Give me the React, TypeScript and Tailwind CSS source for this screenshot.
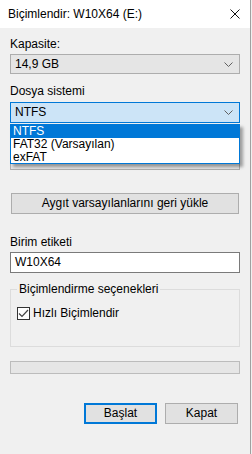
const Chevron = () => (
  <svg width="9" height="5" viewBox="0 0 9 5" className="shrink-0">
    <path d="M0.5 0.5 L4.5 4.5 L8.5 0.5" fill="none" stroke="#606060" strokeWidth="1" />
  </svg>
);

const Combo = ({ value, active = false, h = "h-[20px]" }: { value: string; active?: boolean; h?: string }) => (
  <div
    className={`${h} flex items-center justify-between pl-[4px] pr-[6px] border ${
      active ? "bg-[#cce4f7] border-[#0078d7]" : "bg-[#e5e5e5] border-[#adadad]"
    }`}
  >
    <span>{value}</span>
    <Chevron />
  </div>
);

const App = () => {
  return (
    <div className="w-[252px] h-[454px] flex bg-[#f0f0f0] text-[12px] leading-[15px] text-black font-['Liberation_Sans',Arial,sans-serif]">
      <div className="w-[250px] flex flex-col">
        {/* title bar */}
        <div className="h-[28px] bg-white flex items-center justify-between pl-[8px] pr-[10px]">
          <span>Biçimlendir: W10X64 (E:)</span>
          <svg width="10" height="10" viewBox="0 0 10 10">
            <path d="M0.5 0.5 L9.5 9.5 M9.5 0.5 L0.5 9.5" stroke="#111" strokeWidth="1" />
          </svg>
        </div>

        <div className="relative flex flex-col px-[10px]">
          <div className="mt-[9px] h-[15px]">Kapasite:</div>
          <div className="mt-[2px]">
            <Combo value="14,9 GB" />
          </div>

          <div className="mt-[10px] h-[15px]">Dosya sistemi</div>
          <div className="mt-[3px]">
            <Combo value="NTFS" active h="h-[21px]" />
          </div>

          {/* allocation size row, hidden under the open list */}
          <div className="mt-[10px] h-[15px]" />
          <div className="mt-[2px] h-[20px] bg-[#e5e5e5] border border-[#adadad]" />

          {/* open list of the file system combo */}
          <div className="absolute left-[10px] top-[96px] w-[230px] h-[40px] bg-white border border-[#0078d7] shadow-[3px_3px_3px_rgba(0,0,0,0.35)] flex flex-col">
            <div className="h-[13px] leading-[13px] bg-[#0078d7] text-white pl-[2px]">NTFS</div>
            <div className="h-[13px] leading-[13px] pl-[2px]">FAT32 (Varsayılan)</div>
            <div className="h-[12px] leading-[12px] pl-[2px]">exFAT</div>
          </div>

          <div className="mt-[23px] mx-[1px] h-[21px] bg-[#e1e1e1] border border-[#adadad] flex items-center justify-center">
            Aygıt varsayılanlarını geri yükle
          </div>

          <div className="mt-[21px] h-[15px]">Birim etiketi</div>
          <div className="mt-[2px] h-[21px] bg-white border border-[#7a7a7a] flex items-center pl-[4px]">W10X64</div>

          <div className="relative mt-[16px] h-[58px] border border-[#dcdcdc] pt-[16px] pl-[6px]">
            <span className="absolute left-[6px] -top-[8px] px-[2px] bg-[#f0f0f0]">Biçimlendirme seçenekleri</span>
            <div className="flex items-center gap-[3px]">
              <div className="w-[13px] h-[13px] border border-[#333] bg-white flex items-center justify-center">
                <svg width="11" height="9" viewBox="0 0 11 9">
                  <path d="M1 4.5 L4 7.5 L10 1" fill="none" stroke="#444" strokeWidth="1.2" />
                </svg>
              </div>
              <span>Hızlı Biçimlendir</span>
            </div>
          </div>

          <div className="mt-[14px] h-[13px] bg-[#e6e6e6] border border-[#bcbcbc]" />

          <div className="mt-[29px] flex justify-end gap-[8px] pr-[2px]">
            <div className="w-[73px] h-[21px] bg-[#e1e1e1] border-2 border-[#0078d7] flex items-center justify-center">Başlat</div>
            <div className="w-[73px] h-[21px] bg-[#e1e1e1] border border-[#adadad] flex items-center justify-center">Kapat</div>
          </div>
        </div>
      </div>
      <div className="w-px bg-[#a0a0a0]" />
      <div className="w-px bg-[#f0f0f0]" />
    </div>
  );
};

export default App;
